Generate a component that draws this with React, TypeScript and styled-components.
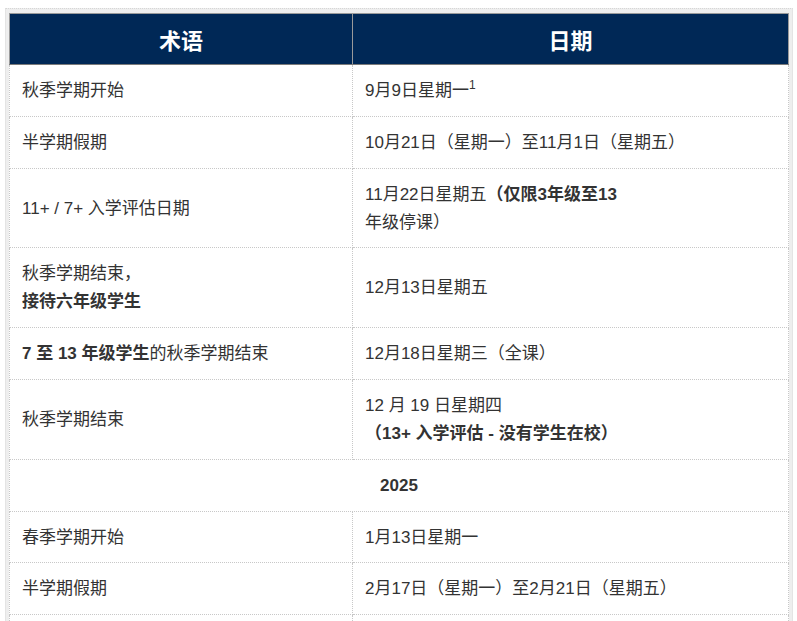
import React from "react";
import styled, { createGlobalStyle } from "styled-components";

const Global = createGlobalStyle`
  html, body { margin: 0; padding: 0; background: #ffffff; }
  body { font-family: "Liberation Sans", Arial, "Noto Sans CJK SC", sans-serif; color: #333333; }
`;

const Frame = styled.div`
  margin: 8px 0 0 5px;
  width: 779px;
  padding: 4px 4px 0 3px;
  background: #eeeeee;
  border-top: 1px dotted #d6d6d6;
  border-left: 1px solid #e4e4e4;
  border-right: 1px solid #e4e4e4;
`;

const Table = styled.table`
  width: 779px;
  border-collapse: collapse;
  background: #ffffff;
  table-layout: fixed;
`;

const HeadCell = styled.th`
  background: #002856;
  color: #ffffff;
  font-size: 22px;
  font-weight: 700;
  height: 50px;
  padding: 0;
  text-align: center;
  border: 1px solid #9a9a9a;
  border-bottom: 1px solid #7a7a7a;
`;

const Cell = styled.td<{ $center?: boolean }>`
  font-size: 17px;
  line-height: 28px;
  padding: 12px 12px 10.8px 12px;
  border: 1px dotted #c8c8c8;
  vertical-align: middle;
  text-align: ${(p) => (p.$center ? "center" : "left")};
  font-weight: ${(p) => (p.$center ? 700 : 400)};
`;

const Sup = styled.sup`
  font-size: 12px;
  line-height: 0;
  vertical-align: 7px;
`;

type Row = { term: React.ReactNode; date: React.ReactNode };

const rows1: Row[] = [
  { term: "秋季学期开始", date: <>9月9日星期一<Sup>1</Sup></> },
  { term: "半学期假期", date: "10月21日（星期一）至11月1日（星期五）" },
  {
    term: "11+ / 7+ 入学评估日期",
    date: (
      <>
        11月22日星期五<b>（仅限3年级至13</b>
        <br />
        年级停课）
      </>
    ),
  },
  {
    term: (
      <>
        秋季学期结束，
        <br />
        <b>接待六年级学生</b>
      </>
    ),
    date: "12月13日星期五",
  },
  { term: <><b>7 至 13 年级学生</b>的秋季学期结束</>, date: "12月18日星期三（全课）" },
  {
    term: "秋季学期结束",
    date: (
      <>
        12 月 19 日星期四
        <br />
        <b>（13+ 入学评估 - 没有学生在校）</b>
      </>
    ),
  },
];

const rows2: Row[] = [
  { term: "春季学期开始", date: "1月13日星期一" },
  { term: "半学期假期", date: "2月17日（星期一）至2月21日（星期五）" },
  { term: "春季学期结束", date: "4月4日星期五" },
];

export default function App() {
  return (
    <>
      <Global />
      <Frame>
        <Table>
          <colgroup>
            <col style={{ width: 343 }} />
            <col style={{ width: 436 }} />
          </colgroup>
          <thead>
            <tr>
              <HeadCell>术语</HeadCell>
              <HeadCell>日期</HeadCell>
            </tr>
          </thead>
          <tbody>
            {rows1.map((r, i) => (
              <tr key={i}>
                <Cell>{r.term}</Cell>
                <Cell>{r.date}</Cell>
              </tr>
            ))}
            <tr>
              <Cell colSpan={2} $center>2025</Cell>
            </tr>
            {rows2.map((r, i) => (
              <tr key={"b" + i}>
                <Cell>{r.term}</Cell>
                <Cell>{r.date}</Cell>
              </tr>
            ))}
          </tbody>
        </Table>
      </Frame>
    </>
  );
}
